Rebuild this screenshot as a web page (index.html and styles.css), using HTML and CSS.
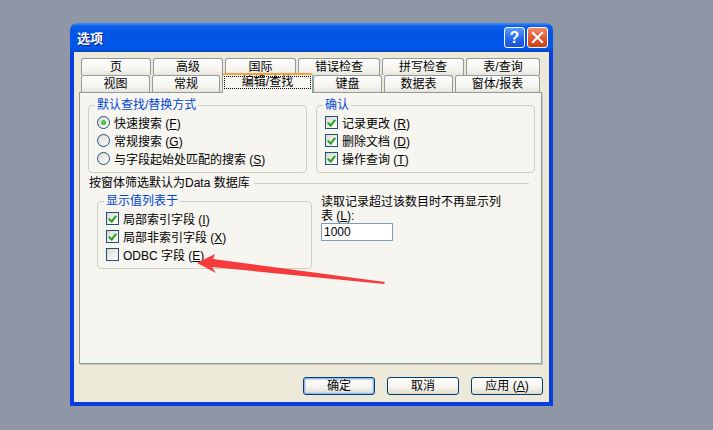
FILE: index.html
```html
<!DOCTYPE html>
<html lang="zh-CN">
<head>
    <meta charset="UTF-8">
    <meta name="viewport" content="width=device-width, initial-scale=1.0">
    <title>选项</title>
    <link rel="stylesheet" href="styles.css">
</head>
<body>
    <div class="ventana">
        <div class="titulo">
            <span class="titulo-texto">选项</span>
            <div class="titulo-botones">
                <span class="btn-ayuda">?</span>
                <span class="btn-cerrar">
                    <svg width="13" height="13" viewBox="0 0 13 13"><path d="M2 2 L11 11 M11 2 L2 11" stroke="#fff" stroke-width="2.2" stroke-linecap="square"/></svg>
                </span>
            </div>
        </div>

        <div class="cliente">
            <div class="pestanas">
                <div class="fila fila1">
                    <div class="pestana" style="width:70px">页</div>
                    <div class="pestana" style="width:70px">高级</div>
                    <div class="pestana" style="width:71px">国际</div>
                    <div class="pestana" style="width:82px">错误检查</div>
                    <div class="pestana" style="width:82px">拼写检查</div>
                    <div class="pestana" style="width:74px">表/查询</div>
                </div>
                <div class="fila fila2">
                    <div class="pestana" style="width:69px">视图</div>
                    <div class="pestana" style="width:68px">常规</div>
                    <div class="pestana activa" style="width:91px"><span class="foco">编辑/查找</span></div>
                    <div class="pestana" style="width:69px">键盘</div>
                    <div class="pestana" style="width:69px">数据表</div>
                    <div class="pestana" style="width:85px">窗体/报表</div>
                </div>
            </div>

            <div class="panel">
                <div class="grupos-arriba">
                    <fieldset class="grupo">
                        <legend>默认查找/替换方式</legend>
                        <div class="opcion"><span class="radio marcado"></span><span>快速搜索 (<u>F</u>)</span></div>
                        <div class="opcion"><span class="radio"></span><span>常规搜索 (<u>G</u>)</span></div>
                        <div class="opcion"><span class="radio"></span><span>与字段起始处匹配的搜索 (<u>S</u>)</span></div>
                    </fieldset>
                    <fieldset class="grupo">
                        <legend>确认</legend>
                        <div class="opcion"><span class="check marcado"></span><span>记录更改 (<u>R</u>)</span></div>
                        <div class="opcion"><span class="check marcado"></span><span>删除文档 (<u>D</u>)</span></div>
                        <div class="opcion"><span class="check marcado"></span><span>操作查询 (<u>T</u>)</span></div>
                    </fieldset>
                </div>

                <div class="separador">
                    <span>按窗体筛选默认为Data 数据库</span>
                    <span class="linea"></span>
                </div>

                <div class="grupos-abajo">
                    <fieldset class="grupo grupo-lista">
                        <legend>显示值列表于</legend>
                        <div class="opcion"><span class="check marcado"></span><span>局部索引字段 (<u>I</u>)</span></div>
                        <div class="opcion"><span class="check marcado"></span><span>局部非索引字段 (<u>X</u>)</span></div>
                        <div class="opcion"><span class="check"></span><span>ODBC 字段 (<u>E</u>)</span></div>
                    </fieldset>
                    <div class="limite">
                        <p>读取记录超过该数目时不再显示列<br>表 (<u>L</u>):</p>
                        <div class="campo">1000</div>
                    </div>
                </div>
            </div>

            <div class="botones">
                <button class="boton defecto">确定</button>
                <button class="boton">取消</button>
                <button class="boton">应用 (<u>A</u>)</button>
            </div>
        </div>
    </div>

    <!-- flecha roja de la captura -->
    <svg class="flecha" width="713" height="430" viewBox="0 0 713 430">
        <polygon points="197,263 215,254 213,259 385,282 384,284 212,267 216,273" fill="#f53b3b"/>
    </svg>
</body>
</html>
```

FILE: styles.css
```css
body {
    margin: 0;
    padding: 0;
    background-color: #8f96a6;
    font-family: "Liberation Sans", "Noto Sans CJK SC", sans-serif;
    font-size: 12px;
    color: #000;
    position: relative;
    height: 430px;
    overflow: hidden;
}

.ventana {
    width: 483px;
    margin: 23px 0 0 70px;
}

.titulo {
    height: 29px;
    border-radius: 7px 7px 0 0;
    background: linear-gradient(to bottom, #3d8ef7 0, #0a5ce8 12%, #0054e3 45%, #0058ea 85%, #0046c8 100%);
    display: flex;
    align-items: center;
    justify-content: space-between;
    padding: 0 5px 0 7px;
}

.titulo-texto {
    color: #fff;
    font-weight: bold;
    font-size: 13px;
    text-shadow: 1px 1px 0 #0a1e80;
}

.titulo-botones {
    display: flex;
    gap: 2px;
}

    .titulo-botones span {
        width: 21px;
        height: 21px;
        box-sizing: border-box;
        border: 1px solid #fff;
        border-radius: 3px;
        display: flex;
        align-items: center;
        justify-content: center;
    }

.btn-ayuda {
    background: linear-gradient(to bottom, #5a9bff, #2264e8 60%, #1a52d6);
    color: #fff;
    font-weight: bold;
    font-size: 16px;
}

.btn-cerrar {
    background: linear-gradient(to bottom, #f08a6a, #e0532c 60%, #c8401c);
}

.cliente {
    background-color: #ece9d8;
    border: 4px solid #0b3ee0;
    border-top: none;
    padding: 6px 7px 7px 5px;
}

.pestanas {
    margin-left: 2px;
}

.fila {
    display: flex;
    gap: 2px;
    height: 17px;
    align-items: flex-end;
}

.pestana {
    box-sizing: border-box;
    height: 17px;
    border: 1px solid #919b9c;
    border-bottom: none;
    border-radius: 3px 3px 0 0;
    background: linear-gradient(to bottom, #fefefe, #f4f3ee 70%, #e6e4da);
    text-align: center;
    line-height: 16px;
}

    .pestana.activa {
        height: 20px;
        margin-bottom: -1px;
        margin-right: -2px;
        position: relative;
        z-index: 1;
        background: #f7f6f2;
        border-top: 2px solid #f1a33a;
        line-height: 17px;
        padding: 1px 1px 0;
    }

.foco {
    display: block;
    outline: 1px dotted #000;
    outline-offset: -1px;
    height: 13px;
    line-height: 13px;
}

.panel {
    box-sizing: border-box;
    height: 272px;
    border: 1px solid #919b9c;
    box-shadow: 1px 1px 0 #c9c7ba;
    background-color: #f6f5f0;
    padding: 5px 6px 0 8px;
}

.grupos-arriba {
    display: flex;
    gap: 9px;
}

.grupo {
    box-sizing: border-box;
    width: 220px;
    height: 75px;
    margin: 0;
    padding: 1px 0 0 8px;
    border: 1px solid #d0d0bf;
    border-radius: 4px;
}

    .grupo legend {
        color: #0046d5;
        padding: 0 2px;
        margin-left: -2px;
        line-height: 14px;
    }

.opcion {
    display: flex;
    align-items: center;
    height: 18px;
    gap: 4px;
    white-space: nowrap;
}

.radio {
    box-sizing: border-box;
    width: 13px;
    height: 13px;
    border: 1px solid #1c5180;
    border-radius: 50%;
    background: linear-gradient(135deg, #dcd9cd, #fff);
    display: flex;
    align-items: center;
    justify-content: center;
}

    .radio.marcado::after {
        content: "";
        width: 5px;
        height: 5px;
        border-radius: 50%;
        background: radial-gradient(circle at 40% 40%, #5fe05f, #1c9a1c);
    }

.check {
    box-sizing: border-box;
    width: 13px;
    height: 13px;
    border: 1px solid #1c5180;
    background: linear-gradient(135deg, #dcd9cd, #fff);
    position: relative;
}

    .check.marcado::after {
        content: "";
        position: absolute;
        left: 3px;
        top: 1px;
        width: 3px;
        height: 6px;
        border-right: 2px solid #21a121;
        border-bottom: 2px solid #21a121;
        transform: rotate(40deg);
    }

.separador {
    display: flex;
    align-items: center;
    margin: 3px 6px 0 1px;
    line-height: 14px;
}

    .separador .linea {
        flex: 1;
        border-top: 1px solid #d0d0bf;
        margin-left: 4px;
    }

.grupos-abajo {
    display: flex;
    gap: 9px;
    margin-top: 4px;
    padding-left: 9px;
}

.grupo-lista {
    width: 215px;
}

.limite {
    margin-top: 1px;
}

    .limite p {
        margin: 0;
        line-height: 14px;
        white-space: nowrap;
    }

.campo {
    box-sizing: border-box;
    width: 72px;
    height: 18px;
    margin-top: 0;
    border: 1px solid #7f9db9;
    background: #fff;
    padding-left: 2px;
    line-height: 16px;
}

.botones {
    display: flex;
    justify-content: flex-end;
    gap: 12px;
    margin: 13px -1px 0 0;
}

.boton {
    box-sizing: border-box;
    width: 72px;
    height: 18px;
    padding: 0;
    border: 1px solid #003c74;
    border-radius: 3px;
    background: linear-gradient(to bottom, #ffffff, #f3f2ec 60%, #dedbcd);
    font-family: inherit;
    font-size: 12px;
    line-height: 14px;
    color: #000;
}

    .boton.defecto {
        box-shadow: inset 0 0 0 1px #98b8ea, inset 0 0 0 2px #c6d7f4;
    }

.flecha {
    position: absolute;
    left: 0;
    top: 0;
    pointer-events: none;
}
```
